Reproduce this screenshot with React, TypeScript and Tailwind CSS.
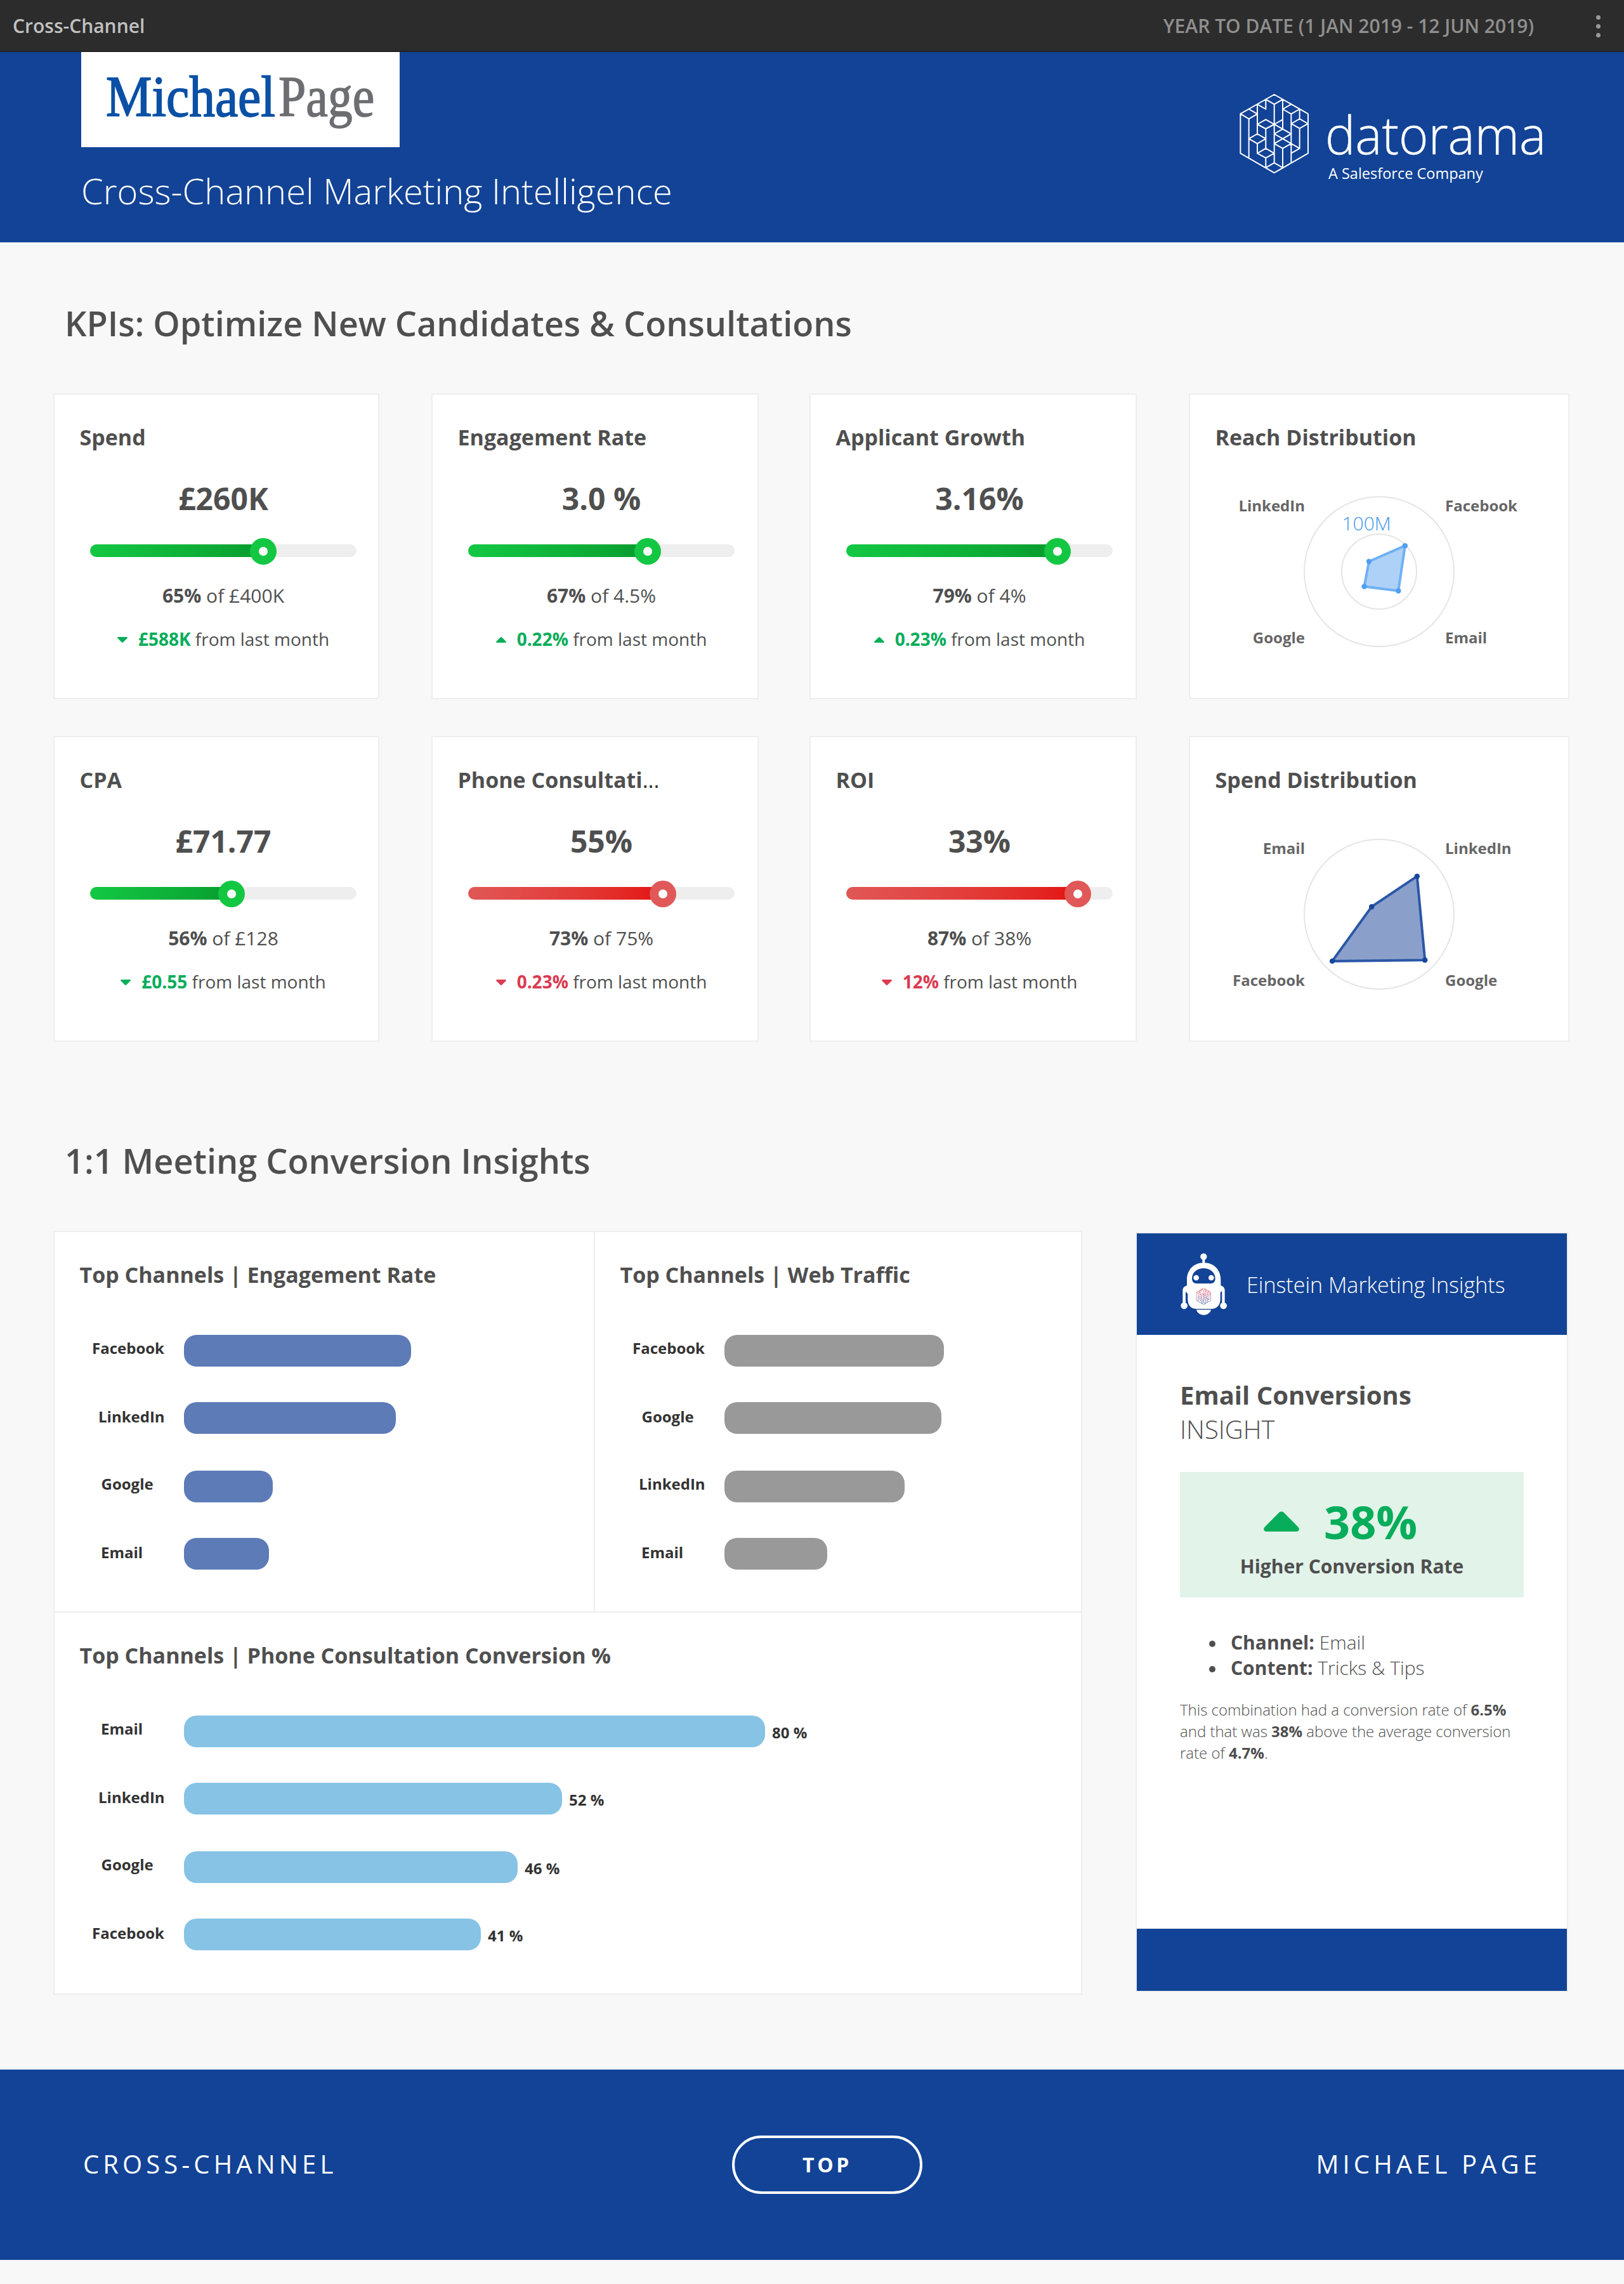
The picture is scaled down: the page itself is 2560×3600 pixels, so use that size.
import type { ReactNode } from "react";

const CUBE_PATH = [
  "M236 57L396 148V335L236 427L76 335V148Z",
  "M196 80L236 103L276 80M236 103V380M276 80V220",
  "M316 103L276 126L316 149L356 126M316 149V380M356 126V172",
  "M116 126L156 149L116 172L76 148M116 172V358",
  "M196 80V126L156 103V243",
  "M196 175L236 198L196 219L156 198ZM196 219V312",
  "M276 175L236 198L276 220",
  "M276 220L316 243L276 266L236 243Z",
  "M276 266L316 289L276 312L236 289ZM276 312V403",
  "M356 172L396 195L356 217L316 195ZM356 217V312",
  "M156 243L196 266L156 289L116 266ZM156 289V335",
  "M196 312L236 335L196 357L156 335ZM196 357V403",
  "M236 380L276 403M236 380L196 403",
  "M316 289L356 312L316 335",
].join("");

function MichaelPageLogo() {
  return (
    <div className="h-[150px] w-[502px] bg-white">
      <svg width="502" height="150" viewBox="0 0 502 150" fontFamily="'Liberation Serif', serif" fontSize="90">
        <text transform="translate(39 101) scale(0.905 1)" fill="#0a50a5" stroke="#0a50a5" strokeWidth="1.8">
          Michael
        </text>
        <text transform="translate(311 101) scale(0.865 1)" fill="#6d6e71" stroke="#6d6e71" strokeWidth="1.5">
          Page
        </text>
      </svg>
    </div>
  );
}

function DatoramaLogo() {
  return (
    <svg width="490" height="160" viewBox="1950 140 490 160" fill="#fff" fontFamily="'Open Sans', sans-serif">
      <g transform="translate(1930 130) scale(0.3333)">
        <path d={CUBE_PATH} fill="none" stroke="#fff" strokeWidth="6" strokeLinejoin="round" strokeLinecap="round" />
      </g>
      <text transform="translate(2089 243) scale(0.958 1)" fontSize="83" fontWeight="300" stroke="#fff" strokeWidth="0.5">
        datorama
      </text>
      <text x="2094" y="282" fontSize="23.5" fontWeight="400">
        A Salesforce Company
      </text>
    </svg>
  );
}

function Caret({ up, className }: { up?: boolean; className: string }) {
  return (
    <svg viewBox="0 0 56 32" preserveAspectRatio="none" className={className} fill="currentColor">
      <path
        d={
          up
            ? "M24.5 1.8Q28 -1 31.5 1.8L54.5 25Q57 28 55 30.5Q54 32 51 32H5Q2 32 1 30.5Q-1 28 1.5 25Z"
            : "M24.5 30.2Q28 33 31.5 30.2L54.5 7Q57 4 55 1.5Q54 0 51 0H5Q2 0 1 1.5Q-1 4 1.5 7Z"
        }
      />
    </svg>
  );
}

function CardTitle({ children }: { children: ReactNode }) {
  return <h3 className="mt-11 pl-[39.5px] text-[34px] leading-[46px] font-bold whitespace-nowrap text-[#4f4f4f]">{children}</h3>;
}

type Kpi = {
  title: string;
  cut?: boolean;
  value: string;
  percent: number;
  fill: number;
  target: string;
  delta: string;
  up?: boolean;
  bad?: boolean;
};

function KpiCard({ kpi }: { kpi: Kpi }) {
  return (
    <article className="h-[482px] border-2 border-[#eeeeee] bg-white">
      <CardTitle>
        {kpi.title}
        {kpi.cut && <span className="font-normal text-[#333]">...</span>}
      </CardTitle>
      <div className="ml-14 flex w-[420px] flex-col items-center text-[#4f4f4f]">
        <p className="mt-[41px] text-[48px] leading-[66px] font-bold whitespace-pre">{kpi.value}</p>
        <div className="mt-[39px] h-5 w-full rounded-full bg-[#eeeeee]">
          <div
            className={
              kpi.bad
                ? "relative h-5 rounded-l-full bg-linear-to-r from-[#e05757] to-[#e30f0f]"
                : "relative h-5 rounded-l-full bg-linear-to-r from-[#13c843] via-[#0ba935] via-75% to-[#079a2d]"
            }
            style={{ width: `${kpi.fill}%` }}
          >
            <span
              className={
                kpi.bad
                  ? "absolute -top-2.5 -right-[21px] flex size-[42px] items-center justify-center rounded-full bg-[#e05858]"
                  : "absolute -top-2.5 -right-[21px] flex size-[42px] items-center justify-center rounded-full bg-[#13c743]"
              }
            >
              <span className="size-3.5 rounded-full bg-white" />
            </span>
          </div>
        </div>
        <p className="mt-[41px] text-[30px] leading-10 whitespace-pre">
          <b>{kpi.percent}%</b> of {kpi.target}
        </p>
        <p className="mt-[29px] flex items-center text-[28px] leading-[38px] whitespace-pre">
          <span className={kpi.bad ? "flex items-center text-[#db3a50]" : "flex items-center text-[#08ad5b]"}>
            <Caret up={kpi.up} className="mt-[3px] mr-[17px] h-[9px] w-4" />
            <b>{kpi.delta}</b>
          </span>
          <span> from last month</span>
        </p>
      </div>
    </article>
  );
}

type Radar = {
  title: string;
  labels: [string, string, string, string];
  values: [number, number, number, number];
  rings: number[];
  stroke: string;
  dot: string;
  fill: string;
  tick?: string;
};

function RadarCard({ radar }: { radar: Radar }) {
  const [ne, se, sw, nw] = radar.values;
  const points = [
    [ne, -ne],
    [se, se],
    [-sw, sw],
    [-nw, -nw],
  ];
  return (
    <article className="h-[482px] border-2 border-[#eeeeee] bg-white">
      <CardTitle>{radar.title}</CardTitle>
      <svg width="596" height="388" viewBox="-298 -189 596 388" fontFamily="'Open Sans', sans-serif" className="block">
        {radar.rings.map((r) => (
          <circle key={r} r={r} fill="none" stroke="#e5e5e5" strokeWidth="2" />
        ))}
        <polygon points={points.map((p) => p.join(",")).join(" ")} fill={radar.fill} stroke={radar.stroke} strokeWidth="4" strokeLinejoin="round" />
        {points.map(([x, y], i) => (
          <circle key={i} cx={x} cy={y} r="4.2" fill={radar.dot} />
        ))}
        {radar.tick && (
          <text x="-58.5" y="-65" fontSize="30" fontWeight="300" fill="#3d96ee">
            {radar.tick}
          </text>
        )}
        <g fontSize="24" fontWeight="700" fill="#666">
          <text x="104" y="-95">{radar.labels[0]}</text>
          <text x="104" y="113">{radar.labels[1]}</text>
          <text x="-117" y="113" textAnchor="end">{radar.labels[2]}</text>
          <text x="-117" y="-95" textAnchor="end">{radar.labels[3]}</text>
        </g>
      </svg>
    </article>
  );
}

const LABEL_INDENT: Record<string, string> = {
  Facebook: "pl-[59px]",
  LinkedIn: "pl-[69px]",
  Google: "pl-[73.5px]",
  Email: "pl-[73px]",
};

type Bar = { name: string; width: number; note?: string };

function BarChart({ title, bars, color }: { title: string; bars: Bar[]; color: string }) {
  return (
    <div className="flow-root">
      <CardTitle>{title}</CardTitle>
      <div className="mt-[72px] text-[24px] leading-8 font-bold text-[#333]">
        {bars.map((bar, i) => (
          <div key={bar.name} className={i === 1 ? "flex h-[108px]" : "flex h-[106px]"}>
            <span className={`w-[204px] shrink-0 ${i % 2 ? "pt-[7px]" : "pt-[5px]"} ${LABEL_INDENT[bar.name]}`}>{bar.name}</span>
            <span className={`h-[50px] shrink-0 rounded-[20px] ${color}`} style={{ width: bar.width }} />
            {bar.note && <span className="pt-[11px] pl-[11px]">{bar.note}</span>}
          </div>
        ))}
      </div>
    </div>
  );
}

function Robot() {
  return (
    <svg width="75" height="100" viewBox="60 40 225 300" fill="#fff">
      <defs>
        <linearGradient id="cubeInk" x1="0" y1="57" x2="0" y2="427" gradientUnits="userSpaceOnUse">
          <stop offset="0" stopColor="#ee3f4e" />
          <stop offset="0.45" stopColor="#b0607f" />
          <stop offset="1" stopColor="#1f58ae" />
        </linearGradient>
      </defs>
      <circle cx="172" cy="60" r="15.5" />
      <path d="M166 72H178V90H166Z" />
      <path d="M93 170C93 122 126 89 173 89C220 89 253 122 253 170V196C266 201 272 208 272 220V290H259V224L251 228V262C251 290 234 307 208 307H138C112 307 97 290 97 262V238C94 232 90 228 87 226V290H73V220C73 208 80 201 93 196Z" />
      <circle cx="80" cy="292" r="16" />
      <circle cx="266" cy="292" r="16" />
      <path d="M138 311H207C204 326 190 336 172.500 336C155 336 141 326 138 311Z" />
      <path d="M117 164C117 134 142 115 172 115C202 115 227 134 227 164C227 179 219 187 206 187H138C125 187 117 179 117 164Z" fill="#124396" />
      <circle cx="137" cy="160" r="13" />
      <circle cx="208" cy="160" r="13" />
      <g transform="translate(122.500 197) scale(0.21)">
        <path d={CUBE_PATH} fill="none" stroke="url(#cubeInk)" strokeWidth="9" />
      </g>
    </svg>
  );
}

const KPI_ROWS: Kpi[][] = [
  [
    { title: "Spend", value: "£260K", percent: 65, fill: 65, target: "£400K", delta: "£588K" },
    { title: "Engagement Rate", value: "3.0 %", percent: 67, fill: 67.4, target: "4.5%", delta: "0.22%", up: true },
    { title: "Applicant Growth", value: "3.16%", percent: 79, fill: 79.2, target: "4%", delta: "0.23%", up: true },
  ],
  [
    { title: "CPA", value: "£71.77", percent: 56, fill: 53, target: "£128", delta: "£0.55" },
    { title: "Phone Consultati", cut: true, value: "55%", percent: 73, fill: 73, target: "75%", delta: "0.23%", bad: true },
    { title: "ROI", value: "33%", percent: 87, fill: 87, target: "38%", delta: "12%", bad: true },
  ],
];

const RADARS: Radar[] = [
  {
    title: "Reach Distribution",
    labels: ["Facebook", "Email", "Google", "LinkedIn"],
    values: [40.8, 30.3, 23.5, 16],
    rings: [118, 59],
    stroke: "#6fb0f4",
    dot: "#529ff0",
    fill: "#aed1f8",
    tick: "100M",
  },
  {
    title: "Spend Distribution",
    labels: ["LinkedIn", "Google", "Facebook", "Email"],
    values: [59.8, 72.2, 73.9, 11.8],
    rings: [118],
    stroke: "#2b57a6",
    dot: "#17479c",
    fill: "#8aa0cb",
  },
];

const ENGAGEMENT: Bar[] = [
  { name: "Facebook", width: 358 },
  { name: "LinkedIn", width: 334 },
  { name: "Google", width: 140 },
  { name: "Email", width: 134 },
];
const TRAFFIC: Bar[] = [
  { name: "Facebook", width: 346 },
  { name: "Google", width: 342 },
  { name: "LinkedIn", width: 284 },
  { name: "Email", width: 162 },
];
const CONSULTATION: Bar[] = [
  { name: "Email", width: 916, note: "80 %" },
  { name: "LinkedIn", width: 596, note: "52 %" },
  { name: "Google", width: 526, note: "46 %" },
  { name: "Facebook", width: 468, note: "41 %" },
];

function SectionHeading({ children }: { children: ReactNode }) {
  return <h2 className="pl-[102px] text-[54px] leading-[80px] font-semibold text-[#4f4f4f]">{children}</h2>;
}

function InsightFact({ label, children }: { label: string; children: ReactNode }) {
  return (
    <li className="flex items-center">
      <span className="mt-1 mr-6 ml-[46px] size-2.5 rounded-full bg-[#4f4f4f]" />
      <span>
        <strong className="font-bold">{label}</strong> {children}
      </span>
    </li>
  );
}

function InsightCard() {
  return (
    <aside className="mt-0.5 h-[1198px] w-[682px] border-2 border-[#eeeeee] bg-white text-[#4f4f4f]">
      <header className="flex h-40 items-center bg-[#124396] pl-[68px]">
        <Robot />
        <span className="ml-[30px] pt-px text-[34px] leading-[46px] font-light text-white">Einstein Marketing Insights</span>
      </header>
      <div className="flex h-[936px] flex-col px-[68px]">
        <h3 className="mt-[68px] text-[40px] leading-[54px] font-bold">Email Conversions</h3>
        <p className="text-[40px] leading-[54px] font-light">INSIGHT</p>
        <div className="mt-10 h-[198px] bg-[#e2f3e9] pt-[29px]">
          <div className="flex h-[98px] items-center pl-[132px] text-[#08ad5b]">
            <Caret up className="h-8 w-14" />
            <span className="ml-[39px] text-[72px] leading-[98px] font-bold">38%</span>
          </div>
          <p className="mt-0.5 text-center text-[30px] leading-10 font-bold">Higher Conversion Rate</p>
        </div>
        <ul className="mt-[51px] text-[30px] leading-10 font-light">
          <InsightFact label="Channel:">Email</InsightFact>
          <InsightFact label="Content:">Tricks &amp; Tips</InsightFact>
        </ul>
        <p className="mt-[29px] text-[24px] leading-[34px] font-light whitespace-nowrap">
          This combination had a conversion rate of <strong className="font-bold">6.5%</strong>
          <br />
          and that was <strong className="font-bold">38%</strong> above the average conversion
          <br />
          rate of <strong className="font-bold">4.7%</strong>.
        </p>
      </div>
      <div className="h-[98px] bg-[#124396]" />
    </aside>
  );
}

export default function App() {
  return (
    <div className="h-[3600px] w-[2560px] overflow-hidden bg-[#f8f8f8] font-['Open_Sans',sans-serif]">
      <nav className="flex h-[82px] items-center border-b-2 border-[#222] bg-[#2c2c2c] pl-5 text-[30px] font-semibold">
        <span className="text-[#c1c1c1]">Cross-Channel</span>
        <span className="ml-auto text-[#8f8f8f]">YEAR TO DATE (1 JAN 2019 - 12 JUN 2019)</span>
        <span className="mr-[37px] ml-[98px] flex flex-col gap-[7px] pt-0.5">
          <i className="size-[7px] rounded-full bg-[#999]" />
          <i className="size-[7px] rounded-full bg-[#999]" />
          <i className="size-[7px] rounded-full bg-[#999]" />
        </span>
      </nav>

      <header className="flex h-[300px] items-start justify-between bg-[#124396] pr-[120px] pl-32">
        <div>
          <MichaelPageLogo />
          <h1 className="mt-7 text-[56px] leading-[80px] font-light text-white">Cross-Channel Marketing Intelligence</h1>
        </div>
        <div className="mt-[58px]">
          <DatoramaLogo />
        </div>
      </header>

      <section className="pt-[87px]">
        <SectionHeading>KPIs: Optimize New Candidates &amp; Consultations</SectionHeading>
        <div className="mt-[71px] flex flex-col gap-[58px] pl-[84px]">
          {KPI_ROWS.map((row, i) => (
            <div key={i} className="grid grid-cols-[596px_596px_598px_600px]">
              {row.map((kpi, j) => (
                <div key={kpi.title} className={j === 0 ? "w-[514px]" : "w-[516px]"}>
                  <KpiCard kpi={kpi} />
                </div>
              ))}
              <RadarCard radar={RADARS[i]} />
            </div>
          ))}
        </div>
      </section>

      <section className="pt-[147px]">
        <SectionHeading>1:1 Meeting Conversion Insights</SectionHeading>
        <div className="mt-[71px] flex items-start gap-[84px] pl-[84px]">
          <div className="h-[1204px] w-[1622px] border-2 border-[#eeeeee] bg-white">
            <div className="flex h-[600px] border-b-2 border-[#eeeeee]">
              <div className="w-[852px] border-r-2 border-[#eeeeee]">
                <BarChart title="Top Channels | Engagement Rate" bars={ENGAGEMENT} color="bg-[#5d7bb6]" />
              </div>
              <BarChart title="Top Channels | Web Traffic" bars={TRAFFIC} color="bg-[#999999]" />
            </div>
            <BarChart title="Top Channels | Phone Consultation Conversion %" bars={CONSULTATION} color="bg-[#86c3e5]" />
          </div>
          <InsightCard />
        </div>
      </section>

      <footer className="mt-[118px] flex h-[300px] items-center bg-[#124396] text-[40px] leading-[54px] text-white">
        <span className="w-[1154px] pb-[3px] pl-[131px] tracking-[6.1px]">CROSS-CHANNEL</span>
        <button className="h-[92px] w-[300px] rounded-full border-4 border-white text-[32px] font-bold tracking-[4.6px]">TOP</button>
        <span className="flex-1 pr-[131px] pb-[3px] text-right tracking-[6.1px]">MICHAEL PAGE</span>
      </footer>
    </div>
  );
}
